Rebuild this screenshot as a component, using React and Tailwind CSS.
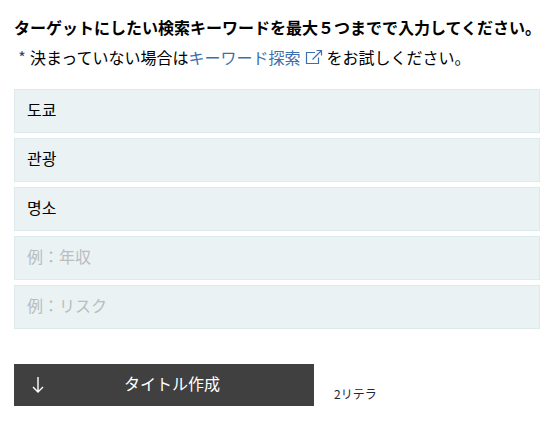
import React, { useState } from 'react';

const initialKeywords = [
  { id: 'keyword-1', value: '도쿄', placeholder: '例：東京' },
  { id: 'keyword-2', value: '관광', placeholder: '例：観光' },
  { id: 'keyword-3', value: '명소', placeholder: '例：名所' },
  { id: 'keyword-4', value: '', placeholder: '例：年収' },
  { id: 'keyword-5', value: '', placeholder: '例：リスク' },
];

function ExternalIcon() {
  return (
    <svg viewBox="0 0 18 16" className="w-[18px] h-4 shrink-0" fill="none" stroke="currentColor" strokeWidth="1.2" aria-hidden="true">
      <path d="M10 3.5H1.5v11h12V8.5" />
      <path d="M7.5 10.5 16.5 1.5M11.5 1.5h5v5" />
    </svg>
  );
}

function ArrowDownIcon() {
  return (
    <svg viewBox="0 0 12 16" className="w-3 h-4" fill="none" stroke="currentColor" strokeWidth="1.4" aria-hidden="true">
      <path d="M6 0v15M1 10l5 5 5-5" />
    </svg>
  );
}

export default function App() {
  const [keywords, setKeywords] = useState(initialKeywords);

  const updateKeyword = (id, value) => {
    setKeywords(keywords.map((k) => (k.id === id ? { ...k, value } : k)));
  };

  return (
    <form
      onSubmit={(e) => e.preventDefault()}
      className="bg-white text-black text-base pl-3.5 pr-[15px] pt-[11px] pb-3.5 font-['Noto_Sans_CJK_JP','Noto_Sans_CJK_KR',sans-serif]"
    >
      <h1 id="keywords-title" className="font-bold leading-8 whitespace-nowrap">
        ターゲットにしたい検索キーワードを最大５つまでで入力してください。
      </h1>
      <p className="flex items-center leading-7 whitespace-nowrap">
        <span className="w-4 text-center text-gray-700">*</span>
        決まっていない場合は
        <a href="#keyword-search" className="flex items-center gap-1 mr-1 text-[#3b6fb0]">
          キーワード探索
          <ExternalIcon />
        </a>
        をお試しください。
      </p>

      <div className="flex flex-col gap-[5px] mt-[18px]" role="group" aria-labelledby="keywords-title">
        {keywords.map((k, i) => (
          <input
            key={k.id}
            id={k.id}
            type="text"
            aria-label={`キーワード${i + 1}`}
            value={k.value}
            placeholder={k.placeholder}
            onChange={(e) => updateKeyword(k.id, e.target.value)}
            className="w-full h-11 px-3 pb-1 bg-[#eaf2f4] border border-[#dde9eb] outline-none placeholder:text-[#b9bdbe]"
          />
        ))}
      </div>

      <div className="flex items-end gap-5 mt-[35px]">
        <button type="submit" className="relative w-[300px] h-[42px] pl-4 pb-1 bg-[#404040] text-white">
          <span className="absolute left-[18px] top-[13px]">
            <ArrowDownIcon />
          </span>
          タイトル作成
        </button>
        <span className="text-xs leading-6 text-gray-800">2リテラ</span>
      </div>
    </form>
  );
}
